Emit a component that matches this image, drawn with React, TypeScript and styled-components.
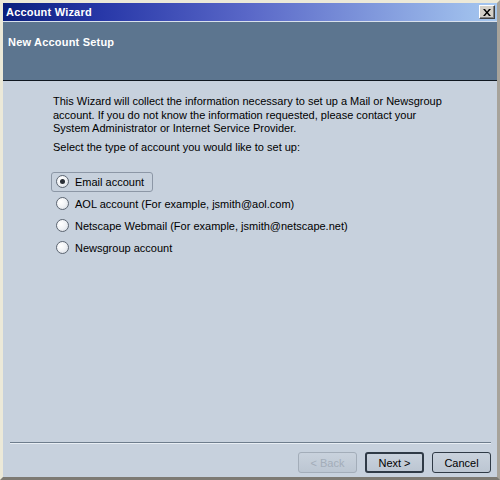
import * as React from 'react';
import styled, { createGlobalStyle } from 'styled-components';

const GlobalStyle = createGlobalStyle`
  html, body {
    margin: 0;
    padding: 0;
    background: #d4d0c8;
  }
`;

const Window = styled.div`
  width: 500px;
  height: 480px;
  box-sizing: border-box;
  display: flex;
  flex-direction: column;
  background: #c7d1dd;
  border-top: 3px solid #ece9d8;
  border-left: 3px solid #ece9d8;
  border-right: 3px solid #a7a39a;
  border-bottom: 3px solid #7d7a73;
  font-family: "Liberation Sans", Arial, sans-serif;
  font-size: 11px;
  color: #000;
`;

const TitleBar = styled.div`
  height: 18px;
  flex: none;
  display: flex;
  align-items: center;
  justify-content: space-between;
  padding: 0 2px 0 3px;
  background: linear-gradient(to right, #0a1f7d 0%, #2838a8 20%, #5a68c8 50%, #a6c8f0 100%);
  border-bottom: 1px solid #d8e0ec;
`;

const TitleText = styled.span`
  color: #fff;
  font-weight: bold;
  font-size: 11px;
  letter-spacing: 0.2px;
`;

const CloseButton = styled.button`
  width: 16px;
  height: 14px;
  padding: 0;
  display: flex;
  align-items: center;
  justify-content: center;
  background: #d4d0c8;
  border: 1px solid;
  border-color: #fff #404040 #404040 #fff;
  box-shadow: inset -1px -1px 0 #808080;
`;

const Header = styled.div`
  height: 59px;
  flex: none;
  background: #5c758f;
  border-bottom: 1px solid #101820;
  padding: 14px 0 0 5px;
  box-sizing: border-box;
`;

const HeaderTitle = styled.div`
  color: #fff;
  font-weight: bold;
  font-size: 11px;
  letter-spacing: 0.2px;
`;

const Body = styled.div`
  flex: 1;
  display: flex;
  flex-direction: column;
  padding: 14px 0 0 50px;
`;

const Paragraph = styled.p`
  margin: 0;
  line-height: 13.5px;
`;

const Prompt = styled.p`
  margin: 4px 0 0;
  line-height: 14px;
`;

const RadioList = styled.div`
  display: flex;
  flex-direction: column;
  gap: 2px;
  margin-top: 18px;
  margin-left: -2px;
`;

const RadioRow = styled.label<{ $focused?: boolean }>`
  align-self: flex-start;
  display: flex;
  align-items: center;
  gap: 6px;
  height: 18px;
  padding: 0 8px 0 4px;
  border: 1px solid ${p => (p.$focused ? '#8c97a6' : 'transparent')};
  border-radius: 3px;
`;

const RadioCircle = styled.span<{ $checked?: boolean }>`
  width: 11px;
  height: 11px;
  border-radius: 50%;
  border: 1px solid #5d6672;
  background: radial-gradient(circle at 35% 35%, #ffffff 0%, #f0f2f5 50%, #cfd5de 100%);
  display: flex;
  align-items: center;
  justify-content: center;
  flex: none;

  &::after {
    content: '';
    width: 5px;
    height: 5px;
    border-radius: 50%;
    background: ${p => (p.$checked ? '#2a2f36' : 'transparent')};
  }
`;

const Footer = styled.div`
  flex: none;
  display: flex;
  flex-direction: column;
  padding: 0 6px 4px 7px;
`;

const Separator = styled.div`
  height: 1px;
  background: #6e7d8c;
  border-bottom: 1px solid #e8eef4;
`;

const ButtonRow = styled.div`
  display: flex;
  justify-content: flex-end;
  gap: 8px;
  margin-top: 8px;
`;

const Button = styled.button<{ $default?: boolean }>`
  width: 59px;
  height: 21px;
  box-sizing: border-box;
  font-family: inherit;
  font-size: 11px;
  color: ${p => (p.disabled ? '#a3adb9' : '#000')};
  background: linear-gradient(#c9d2dd, #bcc6d2);
  border: ${p => (p.$default ? '2px' : '1px')} solid ${p => (p.disabled ? '#a3adb9' : '#2f3a46')};
  border-radius: 3px;
  padding: 0;
`;

export default function App() {
  const options = [
    'Email account',
    'AOL account (For example, jsmith@aol.com)',
    'Netscape Webmail (For example, jsmith@netscape.net)',
    'Newsgroup account',
  ];
  const [selected, setSelected] = React.useState(0);

  return (
    <>
      <GlobalStyle />
      <Window>
        <TitleBar>
          <TitleText>Account Wizard</TitleText>
          <CloseButton aria-label="Close">
            <svg width="8" height="7" viewBox="0 0 8 7">
              <path d="M0 0h2l2 2.5L6 0h2L5 3.5 8 7H6L4 4.5 2 7H0l3-3.5z" fill="#000" />
            </svg>
          </CloseButton>
        </TitleBar>
        <Header>
          <HeaderTitle>New Account Setup</HeaderTitle>
        </Header>
        <Body>
          <Paragraph>
            This Wizard will collect the information necessary to set up a Mail or Newsgroup
            <br />
            account. If you do not know the information requested, please contact your
            <br />
            System Administrator or Internet Service Provider.
          </Paragraph>
          <Prompt>Select the type of account you would like to set up:</Prompt>
          <RadioList>
            {options.map((label, i) => (
              <RadioRow key={label} $focused={i === selected} onClick={() => setSelected(i)}>
                <RadioCircle $checked={i === selected} />
                {label}
              </RadioRow>
            ))}
          </RadioList>
        </Body>
        <Footer>
          <Separator />
          <ButtonRow>
            <Button disabled>&lt; Back</Button>
            <Button $default>Next &gt;</Button>
            <Button>Cancel</Button>
          </ButtonRow>
        </Footer>
      </Window>
    </>
  );
}
